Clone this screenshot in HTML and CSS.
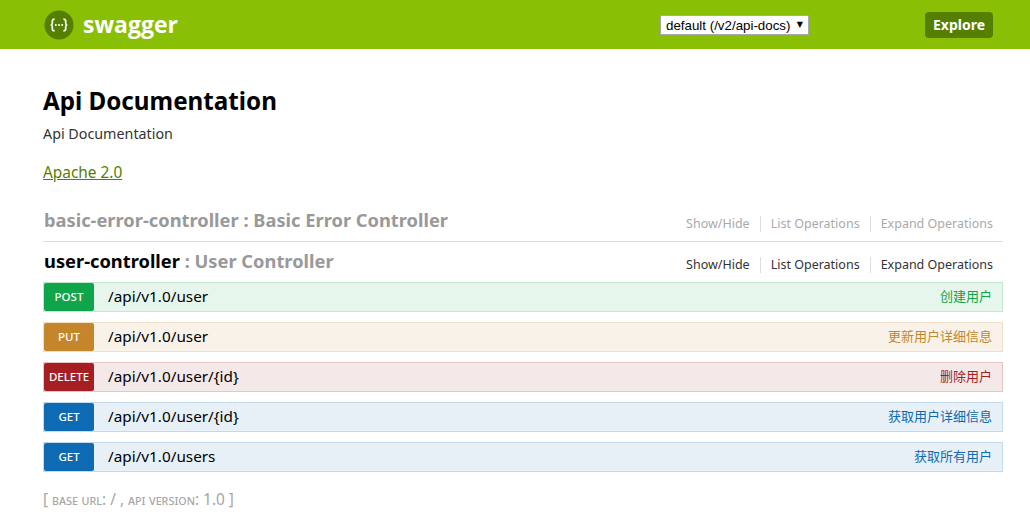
FILE: index.html
```html
<!DOCTYPE html>
<html lang="en">
<head>
<meta charset="utf-8">
<title>Swagger UI</title>
<link rel="stylesheet" href="styles.css">
</head>
<body>
<header class="header">
  <div class="brand">
    <svg class="logo" width="30" height="30" viewBox="0 0 30 30" aria-hidden="true">
      <circle cx="15" cy="15" r="14.5" fill="#547f00"/>
      <path d="M10.6 9.2c-1.7 0-2.3.7-2.3 2.1v1.9c0 1-.5 1.6-1.5 1.8 1 .2 1.5.8 1.5 1.8v1.9c0 1.4.6 2.1 2.3 2.1M19.4 9.2c1.7 0 2.3.7 2.3 2.1v1.9c0 1 .5 1.6 1.5 1.8-1 .2-1.5.8-1.5 1.8v1.9c0 1.4-.6 2.1-2.3 2.1" fill="none" stroke="#fff" stroke-width="1.7"/>
      <circle cx="11.8" cy="15" r="1" fill="#fff"/><circle cx="15" cy="15" r="1" fill="#fff"/><circle cx="18.2" cy="15" r="1" fill="#fff"/>
    </svg>
    <span class="brand-name">swagger</span>
  </div>
  <div class="select-wrap">
    <select class="spec-select"><option>default (/v2/api-docs)</option></select>
  </div>
  <a class="explore" href="#">Explore</a>
</header>
<main class="container">
  <h1 class="title">Api Documentation</h1>
  <p class="description">Api Documentation</p>
  <a class="license" href="#">Apache 2.0</a>

  <section class="resource">
    <div class="resource-head muted">
      <h2 class="resource-title"><span class="controller">basic-error-controller</span><span class="resource-desc"> : Basic Error Controller</span></h2>
      <ul class="ops"><li>Show/Hide</li><li>List Operations</li><li>Expand Operations</li></ul>
    </div>
  </section>

  <section class="resource resource-open">
    <div class="resource-head">
      <h2 class="resource-title"><span class="controller">user-controller</span><span class="resource-desc"> : User Controller</span></h2>
      <ul class="ops"><li>Show/Hide</li><li>List Operations</li><li>Expand Operations</li></ul>
    </div>
    <div class="endpoints">
      <div class="endpoint post"><span class="method">POST</span><span class="path">/api/v1.0/user</span><span class="summary">创建用户</span></div>
      <div class="endpoint put"><span class="method">PUT</span><span class="path">/api/v1.0/user</span><span class="summary">更新用户详细信息</span></div>
      <div class="endpoint delete"><span class="method">DELETE</span><span class="path">/api/v1.0/user/{id}</span><span class="summary">删除用户</span></div>
      <div class="endpoint get"><span class="method">GET</span><span class="path">/api/v1.0/user/{id}</span><span class="summary">获取用户详细信息</span></div>
      <div class="endpoint get"><span class="method">GET</span><span class="path">/api/v1.0/users</span><span class="summary">获取所有用户</span></div>
    </div>
  </section>

  <p class="footer-info">[ <span class="caps">base url</span>: / , <span class="caps">api version</span>: 1.0 ]</p>
</main>
</body>
</html>
```
FILE: styles.css
```css
* { box-sizing: border-box; }
html, body { margin: 0; padding: 0; }
body {
  background: #fff;
  color: #000;
  font-family: "Noto Sans", "Noto Sans CJK SC", sans-serif;
  overflow: hidden;
}
.header {
  height: 49px;
  background: #89bf04;
  display: flex;
  align-items: center;
  padding: 0 37px 0 44px;
}
.brand { display: flex; align-items: center; width: 616px; }
.logo { display: block; margin-right: 9px; }
.brand-name {
  color: #fff;
  font-family: "Open Sans", sans-serif;
  font-size: 23px;
  font-weight: 700;
  line-height: 30px;
  margin-top: -2px;
}
.select-wrap {
  position: relative;
  width: 149px;
  height: 20px;
  margin-top: 1px;
}
.select-wrap::after {
  content: "▼";
  position: absolute;
  top: 4px;
  right: 6px;
  font-family: "DejaVu Sans", sans-serif;
  font-size: 8px;
  line-height: 12px;
  color: #000;
  pointer-events: none;
}
.spec-select {
  appearance: none;
  display: block;
  width: 100%;
  height: 100%;
  background: #fff;
  border: 1px solid #a9a9a9;
  border-radius: 0;
  padding: 0 0 0 5px;
  color: #000;
  font-family: "Liberation Sans", Arial, sans-serif;
  font-size: 13.33px;
}
.explore {
  margin-left: auto;
  width: 68px;
  height: 26px;
  background: #547f00;
  border-radius: 4px;
  color: #fff;
  font-size: 14px;
  font-weight: 700;
  line-height: 26px;
  text-align: center;
  text-decoration: none;
}
.container { margin: 0 27px 0 43px; }
.title {
  margin: 0;
  padding-top: 36px;
  font-size: 24.2px;
  line-height: 32px;
  font-weight: 700;
  color: #000;
}
.description {
  margin: 7px 0 0;
  font-size: 14.3px;
  line-height: 19px;
  color: #333;
}
.license {
  display: block;
  margin-top: 19px;
  font-size: 15.4px;
  line-height: 22px;
  color: #547f00;
  text-decoration: underline;
}
.resource { border-bottom: 1px solid #ddd; margin-top: 18px; }
.resource-open { border-bottom: 0; margin-top: 0; }
.resource-head {
  height: 39px;
  display: flex;
  justify-content: space-between;
  align-items: flex-start;
  padding-left: 1px;
}
.resource-open .resource-head { height: 40px; }
.resource-title {
  margin: 0;
  padding-top: 4px;
  font-size: 18.3px;
  line-height: 27px;
  font-weight: 700;
  color: #000;
}
.resource-open .resource-title { padding-top: 5px; }
.muted .controller { color: #999; }
.resource-desc { color: #999; }
.ops {
  list-style: none;
  display: flex;
  margin: 14px 0 0;
  padding: 0;
  font-size: 12.5px;
  line-height: 16px;
  color: #333;
}
.resource-open .ops { margin-top: 15px; }
.muted .ops { color: #aaa; }
.ops li { padding: 0 10px; border-left: 1px solid #ddd; }
.ops li:first-child { border-left: 0; }
.endpoints { display: flex; flex-direction: column; gap: 10px; }
.endpoint {
  height: 30px;
  border: 1px solid;
  display: flex;
  align-items: center;
}
.method {
  width: 50px;
  height: 28px;
  flex: none;
  border-radius: 2px;
  color: #fff;
  font-size: 11.5px;
  font-weight: 500;
  line-height: 28px;
  text-align: center;
}
.path {
  margin-left: 14px;
  padding-bottom: 2px;
  font-size: 15.3px;
  line-height: 22px;
  color: #000;
}
.summary {
  margin-left: auto;
  padding-right: 10px;
  padding-bottom: 2px;
  font-size: 13px;
  line-height: 18px;
}
.post { background: #e7f6ec; border-color: #c3e8d1; }
.post .method { background: #10a54a; }
.post .summary { color: #10a54a; }
.put { background: #f9f2e9; border-color: #f0e0ca; }
.put .method { background: #c5862b; }
.put .summary { color: #c5862b; }
.delete { background: #f5e8e8; border-color: #e8c6c7; }
.delete .method { background: #a41e22; }
.delete .summary { color: #a41e22; }
.get { background: #e7f0f7; border-color: #c3d9ec; }
.get .method { background: #0f6ab4; }
.get .summary { color: #0f6ab4; }
.footer-info {
  margin: 17px 0 0;
  font-size: 15.4px;
  line-height: 22px;
  color: #a6a6a6;
}
.caps { font-variant: small-caps; font-size: 13.3px; }
```
